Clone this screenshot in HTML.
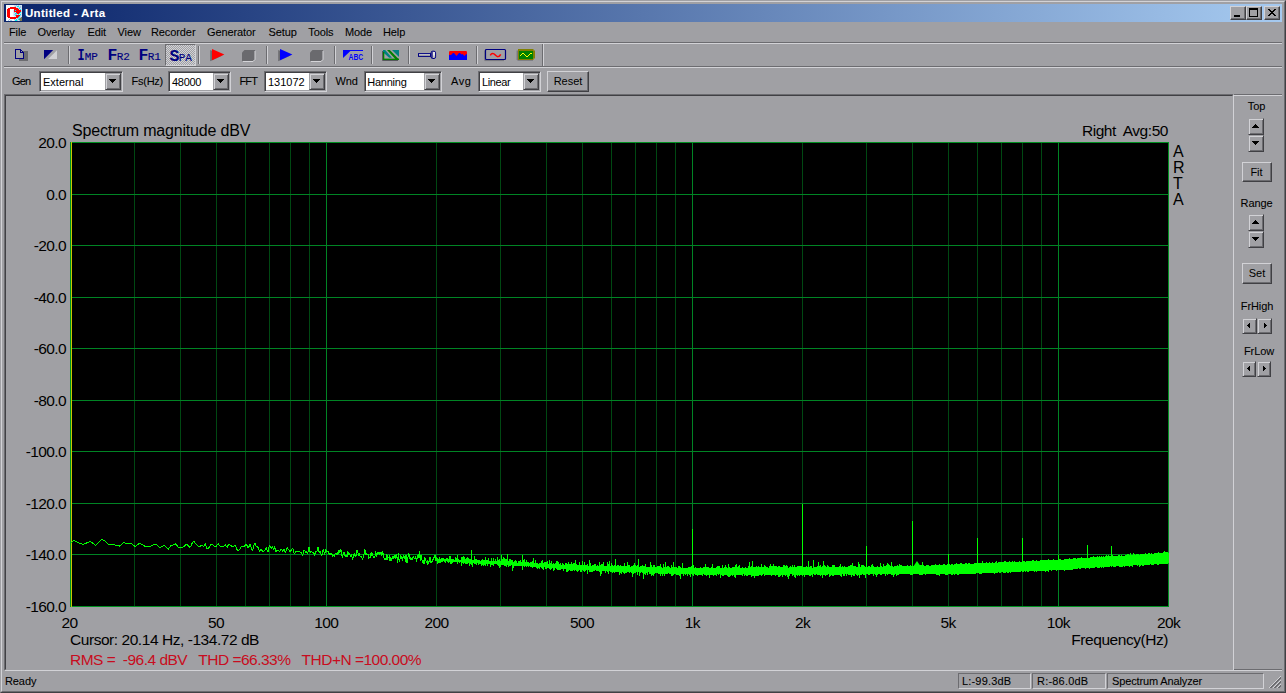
<!DOCTYPE html>
<html><head><meta charset="utf-8"><title>Untitled - Arta</title><style>
:root{--hl:#d2d2d6;--sh:#6c6c70;--dk:#404044}
*{margin:0;padding:0;box-sizing:border-box}
html,body{width:1286px;height:693px;overflow:hidden;background:#a0a0a4}
body{position:relative;font-family:"Liberation Sans",sans-serif;font-size:11px;color:#000;line-height:13px}
.a{position:absolute}
.t{position:absolute;white-space:nowrap;font-size:11px;line-height:13px;letter-spacing:-0.1px;-webkit-text-stroke:0.08px}
.p{position:absolute;white-space:nowrap;font-size:15.5px;line-height:17px;color:#000;letter-spacing:-0.45px}
.hl{position:absolute;height:1px}
.vl{position:absolute;width:1px}
.btn{position:absolute;background:#a0a0a4;border:1px solid;border-color:var(--hl) var(--dk) var(--dk) var(--hl);box-shadow:inset -1px -1px 0 var(--sh)}
.btn span{position:absolute;left:0;right:0;text-align:center;font-size:11px;line-height:13px}
.combo{position:absolute;height:21px;background:#fff;border:1px solid;border-color:var(--sh) var(--hl) var(--hl) var(--sh);box-shadow:inset 1px 1px 0 var(--dk),inset -1px -1px 0 #a0a0a4}
.combo .tx{position:absolute;left:3px;top:4px;font-size:11px;line-height:13px;white-space:nowrap}
.combo .dd{position:absolute;right:1px;top:1px;width:16px;height:17px;background:#a0a0a4;border:1px solid;border-color:#a0a0a4 var(--dk) var(--dk) #a0a0a4;box-shadow:inset 1px 1px 0 var(--hl),inset -1px -1px 0 var(--sh)}
.combo .dd:after{content:"";position:absolute;left:3px;top:5px;width:7px;height:4px;background:#000;clip-path:polygon(0 0,7px 0,7px 1px,6px 1px,6px 2px,5px 2px,5px 3px,4px 3px,4px 4px,3px 4px,3px 3px,2px 3px,2px 2px,1px 2px,1px 1px,0 1px)}
.spin{position:absolute;background:#a0a0a4;border:1px solid;border-color:#a0a0a4 var(--dk) var(--dk) #a0a0a4;box-shadow:inset 1px 1px 0 var(--hl),inset -1px -1px 0 var(--sh)}
</style></head><body>
<div class="a" style="left:0;top:0;width:1286px;height:693px;border:1px solid;border-color:#a0a0a4 var(--dk) var(--dk) #a0a0a4"></div>
<div class="a" style="left:1px;top:1px;width:1284px;height:691px;border:1px solid;border-color:var(--hl) var(--sh) var(--sh) var(--hl)"></div>
<div class="a" style="left:4px;top:4px;width:1278px;height:18px;background:linear-gradient(to right,#0a246a,#a6caf0)"></div>
<svg class="a" style="left:6px;top:5px" width="16" height="16" viewBox="0 0 16 16" shape-rendering="crispEdges"><rect width="16" height="16" fill="#f4f9fd"/><rect x="8" y="0" width="8" height="16" fill="#cfe4f4"/><g fill="#9cc4e8"><rect x="10" y="0" width="1" height="1"/><rect x="12" y="0" width="1" height="1"/><rect x="14" y="1" width="1" height="1"/><rect x="9" y="1" width="1" height="1"/><rect x="13" y="2" width="1" height="1"/><rect x="14" y="2" width="1" height="1"/><rect x="12" y="3" width="1" height="1"/><rect x="14" y="5" width="1" height="1"/><rect x="8" y="7" width="1" height="1"/><rect x="8" y="9" width="1" height="1"/><rect x="9" y="9" width="1" height="1"/><rect x="10" y="9" width="1" height="1"/><rect x="13" y="10" width="1" height="1"/><rect x="14" y="10" width="1" height="1"/><rect x="14" y="12" width="1" height="1"/><rect x="13" y="12" width="1" height="1"/><rect x="11" y="13" width="1" height="1"/><rect x="12" y="13" width="1" height="1"/><rect x="3" y="14" width="1" height="1"/><rect x="4" y="15" width="1" height="1"/><rect x="5" y="15" width="1" height="1"/><rect x="2" y="15" width="1" height="1"/><rect x="8" y="14" width="1" height="1"/><rect x="11" y="15" width="1" height="1"/><rect x="13" y="15" width="1" height="1"/></g><g fill="#00f0f0"><rect x="9" y="5" width="1" height="1"/><rect x="8" y="4" width="1" height="1"/><rect x="7" y="4" width="1" height="1"/><rect x="14" y="7" width="1" height="1"/><rect x="9" y="8" width="1" height="1"/><rect x="10" y="8" width="1" height="1"/><rect x="13" y="8" width="1" height="1"/><rect x="14" y="9" width="1" height="1"/><rect x="12" y="9" width="1" height="1"/><rect x="9" y="10" width="1" height="1"/><rect x="13" y="11" width="1" height="1"/><rect x="12" y="12" width="1" height="1"/><rect x="13" y="13" width="1" height="1"/><rect x="9" y="15" width="1" height="1"/><rect x="10" y="15" width="1" height="1"/><rect x="11" y="1" width="1" height="1"/><rect x="12" y="1" width="1" height="1"/><rect x="13" y="3" width="1" height="1"/><rect x="14" y="4" width="1" height="1"/><rect x="10" y="14" width="1" height="1"/><rect x="12" y="14" width="1" height="1"/></g><g fill="#7a7850"><rect x="14" y="13" width="1" height="1"/><rect x="15" y="13" width="1" height="1"/><rect x="13" y="14" width="1" height="1"/><rect x="14" y="14" width="1" height="1"/><rect x="15" y="14" width="1" height="1"/><rect x="14" y="15" width="1" height="1"/><rect x="15" y="15" width="1" height="1"/><rect x="15" y="12" width="1" height="1"/></g><rect x="4" y="4" width="4" height="8" fill="#fff"/><rect x="7" y="5" width="1" height="6" fill="#d8ecfa"/><g fill="#f00"><rect x="4" y="2" width="6" height="1"/><rect x="2" y="3" width="10" height="1"/><rect x="1" y="4" width="3" height="1"/><rect x="8" y="4" width="5" height="1"/><rect x="1" y="5" width="3" height="1"/><rect x="8" y="5" width="1" height="1"/><rect x="10" y="5" width="5" height="1"/><rect x="1" y="6" width="3" height="1"/><rect x="8" y="6" width="7" height="1"/><rect x="1" y="7" width="3" height="1"/><rect x="10" y="7" width="4" height="1"/><rect x="1" y="8" width="3" height="1"/><rect x="11" y="8" width="2" height="1"/><rect x="1" y="9" width="3" height="1"/><rect x="1" y="10" width="3" height="1"/><rect x="10" y="10" width="4" height="1"/><rect x="1" y="11" width="3" height="1"/><rect x="10" y="11" width="3" height="1"/><rect x="2" y="12" width="10" height="1"/><rect x="4" y="13" width="6" height="1"/></g></svg>
<div class="t" style="left:25px;top:6px;color:#fff;font-weight:bold;font-size:11.5px;line-height:14px;letter-spacing:0.32px">Untitled - Arta</div>
<div class="btn" style="left:1230px;top:6px;width:16px;height:14px"><div class="a" style="left:3px;top:8px;width:6px;height:2px;background:#000"></div></div>
<div class="btn" style="left:1246px;top:6px;width:16px;height:14px"><div class="a" style="left:2px;top:1px;width:9px;height:9px;border:1px solid #000;border-top-width:2px"></div></div>
<div class="btn" style="left:1264px;top:6px;width:16px;height:14px"><svg class="a" style="left:0;top:0" width="14" height="12" viewBox="0 0 14 12" shape-rendering="crispEdges" fill="#000"><rect x="3" y="2" width="2" height="1"/><rect x="9" y="2" width="2" height="1"/><rect x="4" y="3" width="2" height="1"/><rect x="8" y="3" width="2" height="1"/><rect x="5" y="4" width="2" height="1"/><rect x="7" y="4" width="2" height="1"/><rect x="6" y="5" width="2" height="1"/><rect x="6" y="5" width="2" height="1"/><rect x="7" y="6" width="2" height="1"/><rect x="5" y="6" width="2" height="1"/><rect x="8" y="7" width="2" height="1"/><rect x="4" y="7" width="2" height="1"/><rect x="9" y="8" width="2" height="1"/><rect x="3" y="8" width="2" height="1"/></svg></div>
<div class="t" style="left:9px;top:26px">File</div>
<div class="t" style="left:37.5px;top:26px">Overlay</div>
<div class="t" style="left:87.5px;top:26px">Edit</div>
<div class="t" style="left:117.5px;top:26px">View</div>
<div class="t" style="left:151px;top:26px">Recorder</div>
<div class="t" style="left:207px;top:26px">Generator</div>
<div class="t" style="left:268.5px;top:26px">Setup</div>
<div class="t" style="left:308.3px;top:26px">Tools</div>
<div class="t" style="left:345px;top:26px">Mode</div>
<div class="t" style="left:383px;top:26px">Help</div>
<div class="hl" style="left:4px;top:42px;width:1278px;background:var(--sh)"></div>
<div class="hl" style="left:4px;top:43px;width:1278px;background:var(--hl)"></div>
<div class="hl" style="left:4px;top:66px;width:1278px;background:var(--sh)"></div>
<div class="hl" style="left:4px;top:67px;width:1278px;background:var(--hl)"></div>
<div class="vl" style="left:68px;top:46px;height:18px;background:var(--sh)"></div>
<div class="vl" style="left:69px;top:46px;height:18px;background:var(--hl)"></div>
<div class="vl" style="left:198px;top:46px;height:18px;background:var(--sh)"></div>
<div class="vl" style="left:199px;top:46px;height:18px;background:var(--hl)"></div>
<div class="vl" style="left:266px;top:46px;height:18px;background:var(--sh)"></div>
<div class="vl" style="left:267px;top:46px;height:18px;background:var(--hl)"></div>
<div class="vl" style="left:334px;top:46px;height:18px;background:var(--sh)"></div>
<div class="vl" style="left:335px;top:46px;height:18px;background:var(--hl)"></div>
<div class="vl" style="left:371px;top:46px;height:18px;background:var(--sh)"></div>
<div class="vl" style="left:372px;top:46px;height:18px;background:var(--hl)"></div>
<div class="vl" style="left:408px;top:46px;height:18px;background:var(--sh)"></div>
<div class="vl" style="left:409px;top:46px;height:18px;background:var(--hl)"></div>
<div class="vl" style="left:476px;top:46px;height:18px;background:var(--sh)"></div>
<div class="vl" style="left:477px;top:46px;height:18px;background:var(--hl)"></div>
<div class="vl" style="left:542px;top:44px;height:22px;background:var(--sh)"></div>
<div class="vl" style="left:543px;top:44px;height:22px;background:var(--hl)"></div>
<svg class="a" style="left:14px;top:48px" width="16" height="14" viewBox="0 0 16 14" shape-rendering="crispEdges"><rect x="5" y="3" width="9" height="10" fill="#6c6c70"/><path d="M1.5 1.5h5l3 3v5.5h-8z" fill="#a0a0a4" stroke="#000080" stroke-width="1"/><path d="M6.5 1.5v3h3" fill="none" stroke="#000080"/></svg>
<svg class="a" style="left:43px;top:49px" width="15" height="11" viewBox="0 0 15 11"><path d="M14 1.2V10H5.2z" fill="#d0d0d4"/><path d="M1 1H10.2L1 10.2z" fill="#000080"/></svg>
<div class="a" style="left:165px;top:44px;width:31px;height:22px;border:1px solid;border-color:var(--sh) var(--hl) var(--hl) var(--sh);background-color:#a0a0a4;background-image:linear-gradient(45deg,#d2d2d6 25%,transparent 25%,transparent 75%,#d2d2d6 75%),linear-gradient(45deg,#d2d2d6 25%,transparent 25%,transparent 75%,#d2d2d6 75%);background-size:2px 2px;background-position:0 0,1px 1px"></div>
<div class="a" style="left:75.5px;top:47px;white-space:nowrap;font-family:'Liberation Mono',monospace;color:#000080;line-height:18px"><span style="font-size:16.5px;font-weight:bold;display:inline-block;transform:scaleX(0.72)">I</span><span style="font-size:11px;margin-left:-0.6px;letter-spacing:-0.1px;-webkit-text-stroke:0.15px #000080">MP</span></div>
<div class="a" style="left:107.5px;top:47px;white-space:nowrap;font-family:'Liberation Mono',monospace;color:#000080;line-height:18px"><span style="font-size:16.5px;font-weight:bold">F</span><span style="font-size:11px;margin-left:-0.6px;letter-spacing:-0.1px;-webkit-text-stroke:0.15px #000080">R2</span></div>
<div class="a" style="left:138.5px;top:47px;white-space:nowrap;font-family:'Liberation Mono',monospace;color:#000080;line-height:18px"><span style="font-size:16.5px;font-weight:bold">F</span><span style="font-size:11px;margin-left:-0.6px;letter-spacing:-0.1px;-webkit-text-stroke:0.15px #000080">R1</span></div>
<div class="a" style="left:169.5px;top:48px;white-space:nowrap;font-family:'Liberation Mono',monospace;color:#000080;line-height:18px"><span style="font-size:16.5px;font-weight:bold">S</span><span style="font-size:11px;margin-left:-0.6px;letter-spacing:-0.1px;-webkit-text-stroke:0.15px #000080">PA</span></div>
<svg class="a" style="left:209px;top:47px" width="17" height="15" viewBox="0 0 17 15"><path d="M1.2 3L13.6 8.6 1.2 14.2z" fill="#6c6c70"/><path d="M3 2L15.4 7.6 3 13.2z" fill="#f00"/></svg>
<svg class="a" style="left:242px;top:49px" width="14" height="13" viewBox="0 0 14 13"><path d="M2.5 1H13V10L11 12H0V3.5z" fill="#6a6a6e"/><path d="M1 12.5h10l2-2V2" fill="none" stroke="#d4d4d8" stroke-width="1"/></svg>
<svg class="a" style="left:277px;top:47px" width="17" height="15" viewBox="0 0 17 15"><path d="M1.2 3L13.6 8.6 1.2 14.2z" fill="#6c6c70"/><path d="M3 2L15.4 7.6 3 13.2z" fill="#00f"/></svg>
<svg class="a" style="left:310px;top:49px" width="14" height="13" viewBox="0 0 14 13"><path d="M2.5 1H13V10L11 12H0V3.5z" fill="#6a6a6e"/><path d="M1 12.5h10l2-2V2" fill="none" stroke="#d4d4d8" stroke-width="1"/></svg>
<svg class="a" style="left:342px;top:49px" width="23" height="12" viewBox="0 0 23 12"><path d="M1 1h20v1.1H8.4L1 8.9z" fill="#00f"/><text x="6.6" y="10.9" font-family="Liberation Sans,sans-serif" font-weight="bold" font-size="8.6" fill="#00f" textLength="14.6" lengthAdjust="spacingAndGlyphs">ABC</text></svg>
<svg class="a" style="left:382px;top:49px" width="18" height="12" viewBox="0 0 18 12"><path d="M0.5 2V11.5H16" fill="none" stroke="#58585e" stroke-width="1"/><path d="M1 1H3.2L10 8.8H7.2L1 3.2Z" fill="#008080"/><path d="M10 1H17V8Z" fill="#008080"/><path d="M5 1H7.8L17 10.4V11H14.2Z" fill="#008000"/><rect x="1" y="3" width="1.3" height="8" fill="#008000"/><rect x="1" y="9.6" width="16" height="1.4" fill="#008000"/></svg>
<svg class="a" style="left:417px;top:50px" width="20" height="10" viewBox="0 0 20 10"><defs><linearGradient id="fg" x1="0" y1="0" x2="0" y2="1"><stop offset="0" stop-color="#f4f4f4"/><stop offset="1" stop-color="#8c8c80"/></linearGradient></defs><rect x="1.5" y="3.6" width="12" height="2.8" fill="url(#fg)" stroke="#000080" stroke-width="1"/><rect x="14.1" y="1.2" width="4.5" height="7.3" rx="1.6" fill="#c4c4c0" stroke="#000080" stroke-width="1"/><rect x="14.6" y="1.5" width="1" height="6.8" fill="#000080"/><rect x="16.4" y="2" width="1.2" height="3.5" fill="#fff"/></svg>
<svg class="a" style="left:449px;top:50px" width="19" height="10" viewBox="0 0 19 10"><rect x="0" y="1" width="18" height="7" rx="1.2" fill="#f00"/><path d="M0 10V4.9H2L4 3H5L7.5 5.9 10 3H11L12.5 4.6 13.5 4 15.5 5.9 17 4.2H18V10z" fill="#00f"/></svg>
<svg class="a" style="left:484px;top:48px" width="23" height="14" viewBox="0 0 23 14"><path d="M0.8 2.5V12.6H20" fill="none" stroke="#77777d" stroke-width="1"/><rect x="1.5" y="1.5" width="20" height="10" rx="0.9" fill="#a0a0a4" stroke="#000080" stroke-width="1.2"/><path d="M6.3 7.3c1.3-2.3 3.2-2.3 5-0.2s3.9 2.2 5.4-0.7" fill="none" stroke="#f00" stroke-width="1.5"/></svg>
<svg class="a" style="left:516px;top:48px" width="20" height="14" viewBox="0 0 20 14"><rect x="0.6" y="2.5" width="1.6" height="9.5" fill="#77777d"/><rect x="1.5" y="12" width="15.5" height="0.8" fill="#77777d"/><path d="M2 1H17.5V2.5H19V10.5H17.5V12H2z" fill="#808000"/><rect x="3" y="3" width="14" height="8" fill="#008000"/><path d="M4.3 7.6L6.9 5.2 11 8.6 15.1 5.3H15.8" fill="none" stroke="#ff0" stroke-width="1" stroke-linejoin="round" shape-rendering="crispEdges"/></svg>
<div class="t" style="left:12px;top:75px;letter-spacing:-0.8px">Gen</div>
<div class="combo" style="left:39px;top:71px;width:84px"><span class="tx" style="letter-spacing:0px;margin-left:0px">External</span><span class="dd"></span></div>
<div class="t" style="left:131.5px;top:75px;letter-spacing:-0.25px">Fs(Hz)</div>
<div class="combo" style="left:168px;top:71px;width:63px"><span class="tx" style="letter-spacing:-0.3px;margin-left:0px">48000</span><span class="dd"></span></div>
<div class="t" style="left:239.5px;top:75px;letter-spacing:-0.9px">FFT</div>
<div class="combo" style="left:264px;top:71px;width:63px"><span class="tx" style="letter-spacing:0px;margin-left:0px">131072</span><span class="dd"></span></div>
<div class="t" style="left:335.5px;top:75px">Wnd</div>
<div class="combo" style="left:364px;top:71px;width:78px"><span class="tx" style="letter-spacing:-0.25px;margin-left:-0.7px">Hanning</span><span class="dd"></span></div>
<div class="t" style="left:451px;top:75px;letter-spacing:0.6px">Avg</div>
<div class="combo" style="left:478px;top:71px;width:63px"><span class="tx" style="letter-spacing:-0.4px;margin-left:0px">Linear</span><span class="dd"></span></div>
<div class="btn" style="left:547px;top:71px;width:42px;height:21px"><span style="top:3px">Reset</span></div>
<div class="a" style="left:4px;top:94px;width:1230px;height:577px;border:1px solid;border-color:var(--sh) var(--hl) var(--hl) var(--sh)"></div>
<div class="a" style="left:5px;top:95px;width:1228px;height:575px;border:1px solid;border-color:var(--dk) #a0a0a4 #a0a0a4 var(--dk)"></div>
<div class="hl" style="left:1234px;top:94px;width:48px;background:var(--sh)"></div>
<div class="hl" style="left:1234px;top:95px;width:48px;background:var(--hl)"></div>
<div class="hl" style="left:1234px;top:669px;width:48px;background:var(--sh)"></div>
<div class="hl" style="left:1234px;top:670px;width:48px;background:var(--hl)"></div>
<div class="t" style="left:1216.5px;width:80px;text-align:center;top:100px">Top</div>
<div class="spin" style="left:1248px;top:118px;width:16px;height:17px"><svg class="a" style="left:3px;top:5px" width="7" height="4" shape-rendering="crispEdges" fill="#000"><rect x="3" y="0" width="1" height="1"/><rect x="2" y="1" width="3" height="1"/><rect x="1" y="2" width="5" height="1"/><rect x="0" y="3" width="7" height="1"/></svg></div>
<div class="spin" style="left:1248px;top:135px;width:16px;height:17px"><svg class="a" style="left:3px;top:5px" width="7" height="4" shape-rendering="crispEdges" fill="#000"><rect x="0" y="0" width="7" height="1"/><rect x="1" y="1" width="5" height="1"/><rect x="2" y="2" width="3" height="1"/><rect x="3" y="3" width="1" height="1"/></svg></div>
<div class="btn" style="left:1242px;top:162px;width:30px;height:20px"><span style="top:3px;left:-1px">Fit</span></div>
<div class="t" style="left:1216.5px;width:80px;text-align:center;top:197px">Range</div>
<div class="spin" style="left:1248px;top:214px;width:16px;height:17px"><svg class="a" style="left:3px;top:5px" width="7" height="4" shape-rendering="crispEdges" fill="#000"><rect x="3" y="0" width="1" height="1"/><rect x="2" y="1" width="3" height="1"/><rect x="1" y="2" width="5" height="1"/><rect x="0" y="3" width="7" height="1"/></svg></div>
<div class="spin" style="left:1248px;top:231px;width:16px;height:17px"><svg class="a" style="left:3px;top:5px" width="7" height="4" shape-rendering="crispEdges" fill="#000"><rect x="0" y="0" width="7" height="1"/><rect x="1" y="1" width="5" height="1"/><rect x="2" y="2" width="3" height="1"/><rect x="3" y="3" width="1" height="1"/></svg></div>
<div class="btn" style="left:1242px;top:263px;width:30px;height:21px"><span style="top:3px">Set</span></div>
<div class="t" style="left:1217px;width:80px;text-align:center;top:300px">FrHigh</div>
<div class="spin" style="left:1242px;top:318px;width:15px;height:16px"><svg class="a" style="left:4px;top:4px" width="3" height="5" shape-rendering="crispEdges" fill="#000"><rect x="2" y="0" width="1" height="5"/><rect x="1" y="1" width="1" height="3"/><rect x="0" y="2" width="1" height="1"/></svg></div>
<div class="spin" style="left:1257px;top:318px;width:15px;height:16px"><svg class="a" style="left:6px;top:4px" width="3" height="5" shape-rendering="crispEdges" fill="#000"><rect x="0" y="0" width="1" height="5"/><rect x="1" y="1" width="1" height="3"/><rect x="2" y="2" width="1" height="1"/></svg></div>
<div class="t" style="left:1219px;width:80px;text-align:center;top:345px">FrLow</div>
<div class="spin" style="left:1242px;top:361px;width:14px;height:16px"><svg class="a" style="left:4px;top:4px" width="3" height="5" shape-rendering="crispEdges" fill="#000"><rect x="2" y="0" width="1" height="5"/><rect x="1" y="1" width="1" height="3"/><rect x="0" y="2" width="1" height="1"/></svg></div>
<div class="spin" style="left:1257px;top:361px;width:14px;height:16px"><svg class="a" style="left:5px;top:4px" width="3" height="5" shape-rendering="crispEdges" fill="#000"><rect x="0" y="0" width="1" height="5"/><rect x="1" y="1" width="1" height="3"/><rect x="2" y="2" width="1" height="1"/></svg></div>
<svg class="a" style="left:0;top:0" width="1286" height="693" viewBox="0 0 1286 693"><rect x="70" y="142" width="1099" height="465" fill="#000"/><path d="M134.5 142V607M180.5 142V607M216.5 142V607M245.5 142V607M269.5 142V607M290.5 142V607M309.5 142V607M436.5 142V607M500.5 142V607M546.5 142V607M582.5 142V607M611.5 142V607M635.5 142V607M656.5 142V607M675.5 142V607M802.5 142V607M866.5 142V607M912.5 142V607M948.5 142V607M977.5 142V607M1001.5 142V607M1022.5 142V607M1041.5 142V607" stroke="#004812" stroke-width="1" fill="none" shape-rendering="crispEdges"/><path d="M326.5 142V607M692.5 142V607M1058.5 142V607M70 194.5H1169M70 245.5H1169M70 297.5H1169M70 348.5H1169M70 400.5H1169M70 451.5H1169M70 503.5H1169M70 554.5H1169" stroke="#008424" stroke-width="1" fill="none" shape-rendering="crispEdges"/><rect x="70.5" y="142.5" width="1098" height="464" fill="none" stroke="#009020" stroke-width="1" shape-rendering="crispEdges"/><path d="M71.5 142V607" stroke="#c8c800" stroke-width="1" shape-rendering="crispEdges"/><path d="M70.5 542.4 L71.2 542.4 L74.2 540.4 L78.7 542.7 L82.5 544.4 L87.4 542.7 L90.2 541.2 L95.5 545.4 L102.0 539.2 L106.0 541.7 L108.5 544.8 L112.0 544.2 L116.0 545.2 L119.5 546.2 L123.4 542.7 L127.2 543.5 L130.9 543.0 L135.4 546.7 L139.6 543.0 L145.8 546.7 L150.8 546.0 L155.8 544.0 L159.5 547.7 L164.5 545.2 L168.2 549.2 L170.8 545.8 L172.4 545.3 L173.9 544.2 L175.4 543.8 L176.9 545.3 L178.4 547.3 L179.8 547.7 L181.3 547.5 L182.7 547.0 L184.2 546.5 L185.6 545.0 L187.0 544.0 L188.4 546.1 L189.7 547.4 L191.1 545.6 L192.5 542.4 L193.8 541.3 L195.1 542.9 L196.4 544.7 L197.8 545.8 L199.0 546.3 L200.3 546.1 L201.6 545.5 L202.9 546.1 L204.1 546.2 L205.4 543.4 L206.6 548.3 L207.8 548.9 L209.1 547.6 L210.3 545.4 L211.5 544.1 L212.7 544.8 L213.8 546.0 L215.0 547.0 L216.2 546.5 L217.3 544.9 L218.5 544.0 L219.6 545.6 L220.8 547.1 L221.9 546.2 L223.0 546.5 L224.1 546.2 L225.2 544.6 L226.3 546.5 L227.4 547.1 L228.5 544.4 L229.5 544.7 L230.6 545.8 L231.6 545.9 L232.7 547.0 L233.7 546.2 L234.8 545.4 L235.8 546.2 L236.8 549.6 L237.8 550.3 L238.9 550.5 L239.9 549.1 L240.9 546.9 L241.8 546.0 L242.8 547.0 L243.8 546.8 L244.8 545.5 L245.7 544.7 L246.7 544.9 L247.7 547.2 L248.6 547.9 L249.6 544.6 L250.5 544.3 L251.4 548.4 L252.3 550.9 L253.3 548.7 L254.2 543.7 L255.1 543.1 L256.0 546.3 L256.9 546.6 L257.8 546.8 L258.7 549.9 L259.6 551.1 L260.5 549.8 L261.3 549.4 L262.2 550.8 L263.1 552.0 L263.9 551.4 L264.8 550.5 L265.6 548.9 L266.5 547.9 L267.3 550.5 L268.2 551.9 L269.0 546.6 L269.8 545.9 L270.7 547.2 L271.5 548.6 L272.3 546.9 L273.1 548.4 L273.9 549.8 L274.7 546.4 L275.5 551.4 L276.3 551.5 L277.1 550.0 L277.9 550.5 L278.7 551.0 L279.5 551.3 L280.2 551.1 L281.0 549.3 L281.8 549.5 L282.6 551.2 L283.3 550.1 L284.1 549.3 L284.8 552.0 L285.6 552.8 L286.3 549.4 L287.1 547.4 L287.8 548.7 L288.6 549.6 L289.3 550.8 L290.0 551.5 L290.7 550.9 L291.5 550.6 L292.2 548.8 L292.9 548.7 L293.6 551.8 L294.3 553.6 L295.0 553.2 L295.7 552.0 L296.5 551.3 L297.1 551.6 L297.8 551.7 L298.5 551.2 L299.2 551.7 L299.9 552.1 L300.6 552.1 L301.3 552.7 L302.0 554.2 L302.6 555.1 L303.3 553.0 L304.0 550.4 L304.6 550.2 L305.3 551.7 L306.0 552.5 L306.6 551.8 L307.3 553.2 L307.9 552.6 L308.6 547.8 L309.2 547.7 L309.9 551.3 L310.5 552.6 L311.2 552.0 L311.8 551.7 L312.4 552.6 L313.1 552.3 L313.7 553.1 L314.3 555.7 L314.9 554.0 L315.6 551.2 L316.2 551.1 L316.8 551.4 L317.4 549.4 L318.0 547.0 L318.6 549.8 L319.2 552.4 L319.8 551.0 L320.5 551.9 L321.1 554.5 L321.7 555.7 L322.2 554.1 L322.8 550.4 L323.4 550.0 L324.0 552.0 L324.6 554.1 L325.2 552.6 L325.8 549.8 L326.4 550.9 L326.9 551.6 L327.5 551.3 L328.1 550.8 L328.7 552.7 L329.2 554.8 L329.8 553.7 L330.4 553.7 L330.9 554.5 L331.5 553.7 L332.1 554.2 L332.6 556.3 L333.2 555.8 L333.7 555.7 L334.3 556.5 L334.8 554.2 L335.4 553.5 L335.9 553.6 L336.5 553.8 L337.0 554.7 L337.6 552.5 L338.1 553.3 L338.6 550.0 L339.2 550.0 L339.7 552.3 L340.2 551.4 L340.8 549.6 L341.3 551.2 L341.8 555.1 L342.4 557.2 L342.9 556.0 L343.4 553.3 L343.9 551.9 L344.4 552.4 L345.0 555.5 L345.5 556.4 L346.0 555.0 L346.5 556.6 L347.0 556.8 L347.5 552.8 L348.0 551.6 L348.5 554.6 L349.0 554.6 L349.5 553.3 L350.0 554.6 L350.5 556.5 L351.0 556.2 L351.5 554.7 L352.0 556.6 L352.5 559.1 L353.0 557.9 L353.5 554.6 L354.0 553.8 L354.5 553.5 L355.0 555.6 L355.4 556.0 L355.9 556.8 L356.4 553.3 L356.9 550.0 L357.4 550.3 L357.8 551.8 L358.3 554.7 L358.8 555.4 L359.3 553.9 L359.7 554.9 L360.2 556.3 L360.7 556.8 L361.1 557.2 L361.6 556.8 L362.1 558.0 L362.5 559.8 L363.0 558.5 L363.4 556.0 L363.9 554.3 L364.4 551.6 L364.8 549.8 L365.3 551.7 L365.7 554.2 L366.2 553.9 L366.6 553.9 L367.1 554.9 L367.5 554.5 L368.0 554.4 L368.4 556.8 L368.9 558.7 L369.3 557.5 L369.8 557.3 L370.2 557.5 L370.6 554.9 L371.1 552.6 L371.5 554.4 L371.9 555.5 L372.4 553.1 L372.8 554.0 L373.2 557.6 L373.7 558.0 L374.1 557.1 L374.5 557.3 L375.0 555.7 L375.4 552.5 L375.8 551.4 L376.2 554.1 L376.7 556.4 L377.1 554.9 L377.5 553.1 L377.9 552.4 L378.3 552.5 L378.8 553.4 L379.2 554.2 L379.6 553.6 L380.0 552.5 L380.4 554.0 L380.8 553.6 L381.2 552.8 L381.7 555.5 L382.1 554.4 L382.5 551.2 L382.9 553.0 L383.3 553.6 L383.7 556.5 L384.1 558.0 L384.5 559.0 L384.9 558.6 L385.3 558.8 L385.7 559.7 L386.1 559.3 L386.5 556.0 L386.9 554.0 L387.3 557.5 L387.7 559.5 L388.1 556.8 L388.5 557.3 L388.9 558.2 L389.3 555.7 L389.6 558.2 L390.0 560.7 L390.4 557.9 L390.8 558.9 L391.2 560.7 L391.6 558.8 L392.0 558.6 L392.4 558.2 L392.7 556.0 L393.1 556.2 L393.5 558.2 L393.9 558.7 L394.3 557.5 L394.6 555.8 L395.0 554.7 L395.4 556.3 L395.8 558.5 L396.1 557.4 L396.5 555.0 L396.9 557.3 L397.3 559.3 L397.6 562.3 L398.0 557.1 L398.4 553.7 L398.7 556.5 L399.1 560.3 L399.5 561.3 L399.8 559.6 L400.2 558.2 L400.6 556.6 L400.9 555.4 L401.3 557.9 L401.7 558.4 L402.0 557.8 L402.4 561.0 L402.7 560.8 L403.1 556.1 L403.4 555.4 L403.8 557.8 L404.2 557.9 L404.5 556.3 L404.9 557.5 L405.2 561.7 L405.6 560.5 L405.9 555.3 L406.3 555.8 L406.6 560.6 L407.0 562.9 L407.3 562.9 L407.7 560.3 L408.0 557.3 L408.4 555.7 L408.7 553.6 L409.1 554.6 L409.4 557.7 L409.7 558.3 L410.1 557.1 L410.4 557.6 L410.8 559.2 L411.1 559.8 L411.5 559.9 L411.8 558.9 L412.1 558.5 L412.5 559.4 L412.8 558.3 L413.1 556.2 L413.5 556.4 L413.8 557.7 L414.2 558.3 L414.5 558.6 L414.8 558.7 L415.2 558.6 L415.5 557.2 L415.8 556.4 L416.1 559.1 L416.5 561.2 L416.8 560.1 L417.1 559.0 L417.5 558.3 L417.8 555.5 L418.1 554.3 L418.4 556.1 L418.8 557.7 L419.1 558.2 L419.4 554.9 L419.7 551.9 L420.1 555.8 L420.4 560.4 L420.7 558.3 L421.0 555.2 L421.3 556.6 L421.7 559.6 L422.0 560.4 L422.3 561.1 L422.6 562.5 L422.9 561.6 L423.2 560.1 L423.6 561.6 L423.9 563.5 L424.2 563.3 L424.5 560.8 L424.8 557.9 L425.1 558.5 L425.4 560.0 L425.7 560.2 L426.1 561.4 L426.4 562.1 L426.7 561.2 L427.0 562.0 L427.3 564.9 L427.6 563.7 L427.9 560.1 L428.2 561.7 L428.5 563.9 L428.8 561.9 L429.1 561.6 L429.4 562.0 L429.7 557.1 L430.0 557.4 L430.3 559.0 L430.6 561.3 L430.9 562.6 L431.2 562.0 L431.5 561.1 L431.8 561.6 L432.1 561.5 L432.4 560.5 L432.7 559.7 L433.0 559.8 L433.3 559.7 L433.6 557.7 L433.9 557.5 L434.2 557.7 L434.5 556.6 L434.8 555.6 L435.1 554.9 L435.4 557.1 L435.7 560.7 L436.0 561.3 L436.3 560.0 L436.5 558.0 L436.8 558.7" stroke="#00ff00" stroke-width="1" fill="none" stroke-linejoin="round" shape-rendering="crispEdges"/><path d="M436.5 558.2V561.2M437.5 558.2V563.8M438.5 559.0V563.2M439.5 557.2V562.6M440.5 559.0V562.6M441.5 558.0V561.6M442.5 558.2V562.3M443.5 558.1V561.2M444.5 558.5V561.5M445.5 559.4V562.8M446.5 558.1V561.4M447.5 558.3V561.7M448.5 558.6V562.8M449.5 555.7V561.8M450.5 555.9V564.2M451.5 558.9V563.5M452.5 558.9V562.9M453.5 558.8V561.9M454.5 559.7V561.8M455.5 556.8V562.4M456.5 558.0V562.3M457.5 555.2V564.0M458.5 559.3V562.4M459.5 560.0V562.7M460.5 559.8V562.3M461.5 556.7V566.0M462.5 557.0V563.0M463.5 556.0V564.0M464.5 556.9V563.4M465.5 558.5V563.8M466.5 558.1V564.3M467.5 556.6V563.8M468.5 557.5V563.4M469.5 559.1V565.5M470.5 558.6V563.7M471.5 559.1V564.8M472.5 560.4V566.7M473.5 560.2V562.8M474.5 556.2V563.5M475.5 559.2V564.2M476.5 559.3V564.7M477.5 559.7V563.4M478.5 560.1V564.9M479.5 559.5V564.0M480.5 560.7V563.6M481.5 560.2V566.1M482.5 559.0V564.7M483.5 560.3V565.9M484.5 559.8V565.4M485.5 556.7V566.2M486.5 559.9V564.2M487.5 560.1V565.5M488.5 558.4V563.8M489.5 560.6V563.7M490.5 561.1V566.5M491.5 557.8V564.8M492.5 560.5V565.0M493.5 557.7V565.7M494.5 560.7V564.2M495.5 558.6V564.2M496.5 561.3V564.2M497.5 556.7V565.3M498.5 560.4V566.0M499.5 559.3V567.6M500.5 560.9V566.9M501.5 555.3V565.0M502.5 559.0V565.3M503.5 557.4V564.8M504.5 557.6V565.5M505.5 558.8V566.0M506.5 558.5V567.4M507.5 553.8V565.0M508.5 561.1V567.0M509.5 559.3V565.6M510.5 559.1V565.7M511.5 560.3V565.4M512.5 560.4V570.6M513.5 562.3V568.0M514.5 561.0V566.4M515.5 559.8V565.7M516.5 561.4V565.5M517.5 562.5V565.7M518.5 561.4V566.2M519.5 561.3V566.2M520.5 559.6V566.1M521.5 562.1V566.3M522.5 555.0V570.2M523.5 560.3V566.1M524.5 558.6V566.8M525.5 562.0V566.0M526.5 559.6V566.5M527.5 562.0V566.1M528.5 561.9V566.9M529.5 562.7V566.3M530.5 561.9V566.8M531.5 562.3V567.3M532.5 561.2V568.2M533.5 558.3V567.3M534.5 563.2V567.3M535.5 560.3V567.1M536.5 562.8V568.4M537.5 563.2V569.2M538.5 563.6V568.2M539.5 562.5V568.9M540.5 562.6V567.3M541.5 560.6V568.0M542.5 560.1V568.5M543.5 563.4V569.8M544.5 562.3V567.2M545.5 561.9V569.4M546.5 562.4V569.0M547.5 561.2V567.9M548.5 564.1V568.3M549.5 559.6V569.4M550.5 563.1V569.7M551.5 561.4V568.8M552.5 563.9V567.8M553.5 563.4V571.1M554.5 563.9V570.2M555.5 563.0V568.4M556.5 561.3V568.6M557.5 561.1V570.1M558.5 562.2V570.3M559.5 564.2V569.6M560.5 562.5V569.6M561.5 564.5V569.1M562.5 563.2V569.3M563.5 563.8V571.1M564.5 564.9V569.1M565.5 562.8V569.4M566.5 563.4V571.5M567.5 563.7V571.7M568.5 562.2V571.0M569.5 564.2V569.5M570.5 564.0V570.9M571.5 561.7V570.6M572.5 563.5V571.2M573.5 563.1V569.7M574.5 563.0V570.6M575.5 560.3V570.3M576.5 563.6V571.1M577.5 565.3V572.4M578.5 565.3V570.8M579.5 562.3V569.9M580.5 565.3V571.6M581.5 565.1V571.6M582.5 560.8V569.7M583.5 565.3V571.2M584.5 562.4V572.3M585.5 565.2V571.4M586.5 564.6V570.4M587.5 564.0V574.2M588.5 565.6V570.4M589.5 560.0V571.7M590.5 563.4V571.8M591.5 565.7V571.9M592.5 564.7V571.9M593.5 564.6V570.7M594.5 563.6V570.9M595.5 564.2V570.3M596.5 565.6V571.0M597.5 564.6V571.4M598.5 565.6V571.0M599.5 562.4V572.3M600.5 565.4V575.6M601.5 564.3V573.6M602.5 563.9V571.1M603.5 561.6V570.6M604.5 566.1V571.2M605.5 566.2V573.2M606.5 566.1V570.8M607.5 561.9V572.3M608.5 564.0V574.4M609.5 561.3V570.8M610.5 566.2V572.0M611.5 562.8V572.0M612.5 564.9V573.1M613.5 565.5V572.4M614.5 564.6V573.1M615.5 559.1V572.2M616.5 566.0V571.7M617.5 565.2V572.1M618.5 564.5V572.3M619.5 565.6V575.1M620.5 564.7V573.1M621.5 565.6V574.2M622.5 565.9V572.4M623.5 566.2V572.7M624.5 563.1V574.1M625.5 565.8V572.5M626.5 566.4V572.5M627.5 562.0V571.9M628.5 565.0V571.8M629.5 564.6V573.4M630.5 566.7V572.0M631.5 566.0V573.1M632.5 566.3V577.0M633.5 565.4V573.6M634.5 563.1V572.9M635.5 565.3V573.0M636.5 565.6V572.2M637.5 565.3V575.1M638.5 559.2V572.2M639.5 566.6V575.7M640.5 566.1V573.3M641.5 566.3V572.2M642.5 565.0V572.9M643.5 565.8V578.6M644.5 566.2V574.2M645.5 564.3V574.9M646.5 566.5V572.8M647.5 567.4V574.5M648.5 566.5V572.4M649.5 566.7V573.7M650.5 561.7V573.9M651.5 565.4V576.0M652.5 566.7V574.7M653.5 564.8V575.5M654.5 565.3V574.0M655.5 567.2V573.3M656.5 567.0V573.1M657.5 565.5V572.9M658.5 565.9V573.5M659.5 566.4V574.2M660.5 564.3V575.9M661.5 566.5V574.1M662.5 567.6V576.0M663.5 563.7V574.0M664.5 567.0V576.2M665.5 561.6V573.5M666.5 567.1V573.7M667.5 566.2V573.9M668.5 565.7V573.4M669.5 566.8V574.4M670.5 567.9V574.0M671.5 564.9V575.6M672.5 566.9V575.9M673.5 561.8V574.5M674.5 566.5V574.2M675.5 567.1V574.1M676.5 567.3V575.3M677.5 568.1V575.3M678.5 566.3V574.6M679.5 565.7V576.4M680.5 566.9V578.9M681.5 568.1V573.8M682.5 562.9V573.9M683.5 567.9V575.8M684.5 568.0V574.0M685.5 567.6V574.6M686.5 568.1V574.0M687.5 567.5V576.4M688.5 566.5V574.0M689.5 567.4V575.2M690.5 567.3V576.8M691.5 566.0V574.2M692.5 566.9V575.2M693.5 564.9V575.8M694.5 567.8V574.1M695.5 566.7V574.7M696.5 568.3V574.9M697.5 568.3V576.1M698.5 567.5V574.5M699.5 568.1V574.7M700.5 567.2V575.0M701.5 567.5V575.3M702.5 567.9V575.6M703.5 566.8V574.4M704.5 566.5V574.7M705.5 564.0V574.5M706.5 567.1V575.7M707.5 566.9V574.6M708.5 566.5V575.4M709.5 568.0V577.5M710.5 568.1V574.9M711.5 567.3V575.2M712.5 563.5V574.5M713.5 567.7V575.6M714.5 567.6V575.0M715.5 567.5V575.0M716.5 567.0V576.3M717.5 566.1V574.4M718.5 565.5V574.8M719.5 565.7V574.4M720.5 568.0V577.9M721.5 568.1V574.9M722.5 564.9V575.8M723.5 567.6V575.7M724.5 566.8V574.9M725.5 565.1V574.8M726.5 566.8V574.9M727.5 567.7V575.8M728.5 563.8V577.1M729.5 566.5V577.4M730.5 568.0V576.0M731.5 568.0V575.4M732.5 567.1V576.3M733.5 567.2V575.4M734.5 566.9V576.9M735.5 565.2V577.6M736.5 564.3V574.7M737.5 567.1V575.1M738.5 566.3V575.3M739.5 565.2V575.1M740.5 567.5V575.3M741.5 567.9V575.4M742.5 567.0V575.8M743.5 567.5V574.4M744.5 567.8V576.1M745.5 566.7V575.4M746.5 567.5V576.2M747.5 567.9V575.7M748.5 565.7V575.2M749.5 561.6V574.6M750.5 567.3V574.7M751.5 566.4V576.8M752.5 560.8V575.7M753.5 567.4V575.8M754.5 567.4V577.5M755.5 566.9V576.4M756.5 566.1V576.0M757.5 567.4V576.1M758.5 566.2V575.5M759.5 566.5V575.0M760.5 566.5V574.9M761.5 563.8V575.5M762.5 566.7V575.0M763.5 566.8V574.4M764.5 564.8V575.6M765.5 565.7V575.4M766.5 566.5V575.1M767.5 566.5V575.3M768.5 567.5V574.6M769.5 566.0V574.6M770.5 564.3V574.5M771.5 565.6V575.6M772.5 566.4V574.6M773.5 564.0V574.9M774.5 566.3V575.3M775.5 565.6V575.5M776.5 566.3V574.8M777.5 566.7V574.7M778.5 566.1V576.5M779.5 565.6V576.5M780.5 567.3V576.2M781.5 566.5V575.2M782.5 566.5V576.7M783.5 565.3V574.8M784.5 564.8V574.9M785.5 566.2V575.6M786.5 564.9V574.5M787.5 565.9V577.1M788.5 567.6V578.7M789.5 566.8V576.3M790.5 565.8V574.4M791.5 567.0V574.4M792.5 564.6V575.8M793.5 567.1V574.6M794.5 564.6V576.5M795.5 566.8V577.8M796.5 567.2V574.8M797.5 566.4V575.6M798.5 566.0V575.3M799.5 566.3V575.9M800.5 565.6V574.5M801.5 565.6V575.1M802.5 566.5V575.6M803.5 567.0V574.5M804.5 566.6V576.7M805.5 566.9V574.7M806.5 566.1V574.5M807.5 566.5V575.3M808.5 561.1V574.6M809.5 567.0V576.3M810.5 566.2V575.6M811.5 566.3V574.5M812.5 567.5V576.6M813.5 560.2V574.3M814.5 566.6V574.5M815.5 566.5V575.0M816.5 567.1V574.3M817.5 566.0V574.8M818.5 562.3V574.7M819.5 566.4V575.1M820.5 565.2V575.9M821.5 567.4V574.7M822.5 565.5V577.7M823.5 561.1V575.0M824.5 565.0V574.5M825.5 565.8V575.6M826.5 567.3V575.4M827.5 564.8V574.5M828.5 565.8V574.3M829.5 566.8V577.1M830.5 566.8V576.0M831.5 566.9V574.9M832.5 565.4V575.6M833.5 564.6V575.6M834.5 564.6V574.6M835.5 567.2V575.3M836.5 566.6V574.5M837.5 566.9V574.6M838.5 567.1V575.4M839.5 566.3V574.9M840.5 563.8V575.8M841.5 567.2V576.5M842.5 566.2V574.0M843.5 566.5V576.0M844.5 565.5V575.6M845.5 566.8V574.0M846.5 566.8V575.7M847.5 567.1V574.3M848.5 565.7V575.1M849.5 565.8V575.0M850.5 565.0V574.9M851.5 564.6V576.6M852.5 563.4V575.2M853.5 566.1V575.6M854.5 566.2V576.3M855.5 566.3V574.4M856.5 567.2V574.8M857.5 566.8V575.5M858.5 561.8V574.9M859.5 563.7V578.0M860.5 567.2V574.6M861.5 565.1V575.1M862.5 564.7V574.1M863.5 564.6V575.1M864.5 565.9V575.4M865.5 566.8V577.6M866.5 567.1V574.1M867.5 567.1V573.8M868.5 565.9V575.1M869.5 566.4V575.3M870.5 566.7V573.9M871.5 565.0V574.1M872.5 564.4V574.1M873.5 565.9V575.5M874.5 567.0V573.9M875.5 566.8V575.1M876.5 567.0V576.8M877.5 565.7V574.9M878.5 566.6V573.7M879.5 566.6V573.7M880.5 563.0V575.0M881.5 566.1V574.7M882.5 566.9V573.8M883.5 564.4V573.7M884.5 565.8V573.8M885.5 565.9V575.7M886.5 565.1V573.9M887.5 563.0V574.5M888.5 564.0V574.2M889.5 565.1V574.4M890.5 566.3V574.4M891.5 561.5V574.9M892.5 566.2V575.4M893.5 566.7V576.6M894.5 566.4V575.3M895.5 566.0V574.3M896.5 566.2V575.7M897.5 565.1V575.1M898.5 565.6V574.7M899.5 564.4V573.8M900.5 565.4V574.3M901.5 565.1V574.0M902.5 566.4V573.8M903.5 565.8V573.7M904.5 566.2V574.3M905.5 566.1V574.2M906.5 566.2V573.8M907.5 564.8V573.8M908.5 565.8V574.1M909.5 565.8V574.3M910.5 565.0V574.5M911.5 565.9V574.5M912.5 565.9V574.5M913.5 565.9V573.8M914.5 565.5V573.8M915.5 565.2V573.9M916.5 565.2V574.1M917.5 565.7V573.9M918.5 565.4V574.3M919.5 565.1V574.9M920.5 565.3V574.5M921.5 565.0V575.1M922.5 562.2V575.0M923.5 564.7V573.9M924.5 565.5V574.3M925.5 565.5V575.1M926.5 564.5V574.1M927.5 564.7V573.9M928.5 565.0V574.4M929.5 565.6V574.2M930.5 565.6V574.0M931.5 565.2V574.3M932.5 565.1V574.1M933.5 565.1V574.0M934.5 564.9V574.1M935.5 563.7V574.4M936.5 565.2V574.6M937.5 565.1V574.6M938.5 564.6V575.3M939.5 564.4V575.5M940.5 565.1V574.3M941.5 565.0V574.0M942.5 564.8V574.2M943.5 563.7V574.3M944.5 564.3V574.0M945.5 565.1V574.8M946.5 565.0V574.7M947.5 564.2V574.6M948.5 564.5V574.4M949.5 564.1V574.3M950.5 564.5V574.1M951.5 564.0V574.8M952.5 563.5V575.0M953.5 564.5V574.2M954.5 564.0V574.8M955.5 563.7V574.4M956.5 563.4V573.8M957.5 564.1V574.5M958.5 564.3V574.7M959.5 564.3V574.1M960.5 563.2V574.2M961.5 562.7V574.0M962.5 563.6V574.0M963.5 564.0V573.8M964.5 563.6V574.4M965.5 563.0V573.8M966.5 563.1V574.0M967.5 563.7V574.2M968.5 563.4V574.0M969.5 563.3V574.3M970.5 563.7V573.5M971.5 563.6V574.0M972.5 563.6V574.0M973.5 563.6V573.6M974.5 563.1V573.8M975.5 563.4V573.6M976.5 562.6V573.4M977.5 562.8V573.4M978.5 563.2V573.2M979.5 563.3V573.8M980.5 563.1V573.8M981.5 563.1V574.0M982.5 561.2V573.2M983.5 562.6V572.9M984.5 562.7V573.4M985.5 563.0V573.1M986.5 561.9V572.7M987.5 562.7V573.1M988.5 562.6V573.3M989.5 562.2V572.8M990.5 563.0V573.2M991.5 562.5V572.6M992.5 562.4V573.0M993.5 562.5V572.6M994.5 562.7V573.5M995.5 562.4V572.9M996.5 561.4V573.2M997.5 562.7V572.5M998.5 561.5V572.3M999.5 562.4V572.7M1000.5 562.4V572.9M1001.5 562.0V572.1M1002.5 562.4V572.1M1003.5 561.6V572.7M1004.5 561.2V572.6M1005.5 561.4V572.5M1006.5 562.2V572.1M1007.5 562.3V572.6M1008.5 561.9V572.7M1009.5 561.2V572.2M1010.5 562.1V573.1M1011.5 562.1V572.2M1012.5 561.4V571.9M1013.5 561.7V571.8M1014.5 560.5V572.1M1015.5 561.9V572.0M1016.5 561.8V571.5M1017.5 561.5V572.1M1018.5 561.5V571.6M1019.5 561.0V571.6M1020.5 561.8V571.8M1021.5 561.5V571.4M1022.5 561.4V571.9M1023.5 560.5V572.2M1024.5 560.9V571.4M1025.5 561.5V571.8M1026.5 561.4V571.4M1027.5 561.3V571.5M1028.5 560.9V571.6M1029.5 561.2V571.1M1030.5 560.9V570.9M1031.5 561.2V571.2M1032.5 559.9V570.9M1033.5 560.4V571.2M1034.5 561.0V571.5M1035.5 561.0V571.3M1036.5 560.1V572.0M1037.5 561.0V571.0M1038.5 560.8V570.9M1039.5 560.5V570.6M1040.5 560.4V570.7M1041.5 560.2V571.3M1042.5 560.3V571.2M1043.5 559.9V570.5M1044.5 560.2V570.8M1045.5 559.8V571.5M1046.5 560.2V570.5M1047.5 559.8V570.5M1048.5 559.3V571.5M1049.5 560.3V570.2M1050.5 560.1V570.3M1051.5 559.8V570.8M1052.5 559.9V570.2M1053.5 559.3V570.2M1054.5 559.8V570.2M1055.5 559.8V569.9M1056.5 560.3V570.7M1057.5 559.5V570.3M1058.5 560.1V570.2M1059.5 559.4V569.8M1060.5 559.1V569.7M1061.5 559.7V569.7M1062.5 559.6V569.8M1063.5 559.5V569.9M1064.5 559.4V571.1M1065.5 558.8V569.7M1066.5 558.9V570.2M1067.5 559.2V569.7M1068.5 559.0V570.0M1069.5 558.3V569.7M1070.5 558.9V569.5M1071.5 558.5V569.8M1072.5 559.0V569.9M1073.5 557.7V569.1M1074.5 558.2V569.4M1075.5 558.3V568.8M1076.5 558.6V569.0M1077.5 558.1V569.2M1078.5 558.0V568.4M1079.5 558.1V569.2M1080.5 558.4V569.4M1081.5 557.3V568.3M1082.5 558.0V568.3M1083.5 557.7V568.3M1084.5 558.0V568.1M1085.5 558.0V569.4M1086.5 557.8V568.2M1087.5 557.9V568.2M1088.5 557.6V568.2M1089.5 557.8V568.8M1090.5 557.4V567.7M1091.5 557.4V568.4M1092.5 557.3V568.3M1093.5 556.4V567.7M1094.5 557.1V567.7M1095.5 556.6V567.3M1096.5 556.9V567.2M1097.5 556.2V567.5M1098.5 556.8V567.7M1099.5 556.3V567.9M1100.5 556.6V567.1M1101.5 556.4V567.6M1102.5 556.8V567.2M1103.5 556.4V568.0M1104.5 556.8V567.4M1105.5 556.2V566.9M1106.5 555.4V566.6M1107.5 555.8V566.6M1108.5 555.3V567.1M1109.5 555.7V566.5M1110.5 556.2V566.4M1111.5 555.9V567.1M1112.5 554.6V566.4M1113.5 556.0V567.1M1114.5 556.2V566.8M1115.5 555.8V567.2M1116.5 555.7V566.4M1117.5 555.5V566.2M1118.5 554.7V566.2M1119.5 555.0V566.6M1120.5 555.7V566.5M1121.5 554.9V566.6M1122.5 555.6V566.8M1123.5 555.6V565.9M1124.5 555.5V566.5M1125.5 555.2V565.8M1126.5 555.0V565.9M1127.5 554.3V565.8M1128.5 554.2V566.3M1129.5 554.8V566.7M1130.5 552.7V565.7M1131.5 554.9V565.6M1132.5 554.6V566.5M1133.5 553.3V565.4M1134.5 554.3V565.4M1135.5 554.8V565.1M1136.5 554.0V565.2M1137.5 553.9V565.5M1138.5 554.1V564.9M1139.5 554.5V566.5M1140.5 553.9V565.6M1141.5 553.6V565.1M1142.5 554.4V565.8M1143.5 554.3V565.9M1144.5 553.9V564.9M1145.5 553.3V564.8M1146.5 553.8V564.6M1147.5 553.9V564.6M1148.5 553.3V564.5M1149.5 553.2V564.9M1150.5 553.6V564.3M1151.5 553.3V564.5M1152.5 553.7V564.5M1153.5 553.5V564.9M1154.5 552.8V564.0M1155.5 553.4V564.0M1156.5 553.3V564.3M1157.5 553.3V564.7M1158.5 552.1V564.8M1159.5 553.2V563.8M1160.5 552.8V564.0M1161.5 553.2V563.6M1162.5 553.1V563.9M1163.5 552.3V563.6M1164.5 551.0V563.6M1165.5 552.2V564.0M1166.5 551.7V563.6M1167.5 552.4V564.1M1168.5 552.6V563.4" stroke="#00ff00" stroke-width="1" fill="none" shape-rendering="crispEdges"/><path d="M692.5 528.5V571.3M802.5 503.5V571.0M866.5 546V570.4M912.5 521V570.0M948.5 553.5V569.5M977.5 538V568.3M1022.5 538V566.5M1058.5 554.5V565.0M1087.5 545V562.9M1111.5 546V561.4M471.5 549.5V561.5" stroke="#00ff00" stroke-width="1" fill="none" shape-rendering="crispEdges"/><path d="M913 567L917 561 921 567z" fill="#00ff00"/></svg>
<div class="p" style="left:72px;top:122px;font-size:16px;line-height:18px;letter-spacing:-0.19px">Spectrum magnitude dBV</div>
<div class="p" style="left:968px;width:200px;text-align:right;top:122px">Right&nbsp; Avg:50</div>
<div class="p" style="left:1173px;top:143px;font-size:16px;line-height:18px;letter-spacing:0">A</div>
<div class="p" style="left:1173px;top:159px;font-size:16px;line-height:18px;letter-spacing:0">R</div>
<div class="p" style="left:1173px;top:175px;font-size:16px;line-height:18px;letter-spacing:0">T</div>
<div class="p" style="left:1173px;top:191px;font-size:16px;line-height:18px;letter-spacing:0">A</div>
<div class="p" style="left:0;width:66px;text-align:right;top:134px;letter-spacing:-0.62px">20.0</div>
<div class="p" style="left:0;width:66px;text-align:right;top:186px;letter-spacing:-0.62px">0.0</div>
<div class="p" style="left:0;width:66px;text-align:right;top:237px;letter-spacing:-0.62px">-20.0</div>
<div class="p" style="left:0;width:66px;text-align:right;top:289px;letter-spacing:-0.62px">-40.0</div>
<div class="p" style="left:0;width:66px;text-align:right;top:340px;letter-spacing:-0.62px">-60.0</div>
<div class="p" style="left:0;width:66px;text-align:right;top:392px;letter-spacing:-0.62px">-80.0</div>
<div class="p" style="left:0;width:66px;text-align:right;top:443px;letter-spacing:-0.62px">-100.0</div>
<div class="p" style="left:0;width:66px;text-align:right;top:495px;letter-spacing:-0.62px">-120.0</div>
<div class="p" style="left:0;width:66px;text-align:right;top:546px;letter-spacing:-0.62px">-140.0</div>
<div class="p" style="left:0;width:66px;text-align:right;top:598px;letter-spacing:-0.62px">-160.0</div>
<div class="p" style="left:29.5px;width:80px;text-align:center;top:614px;letter-spacing:-0.62px">20</div>
<div class="p" style="left:176.1px;width:80px;text-align:center;top:614px;letter-spacing:-0.62px">50</div>
<div class="p" style="left:286.3px;width:80px;text-align:center;top:614px;letter-spacing:-0.62px">100</div>
<div class="p" style="left:396.5px;width:80px;text-align:center;top:614px;letter-spacing:-0.62px">200</div>
<div class="p" style="left:542.1px;width:80px;text-align:center;top:614px;letter-spacing:-0.62px">500</div>
<div class="p" style="left:652.3px;width:80px;text-align:center;top:614px;letter-spacing:-0.62px">1k</div>
<div class="p" style="left:762.5px;width:80px;text-align:center;top:614px;letter-spacing:-0.62px">2k</div>
<div class="p" style="left:908.1px;width:80px;text-align:center;top:614px;letter-spacing:-0.62px">5k</div>
<div class="p" style="left:1018.3px;width:80px;text-align:center;top:614px;letter-spacing:-0.62px">10k</div>
<div class="p" style="left:1128.5px;width:80px;text-align:center;top:614px;letter-spacing:-0.62px">20k</div>
<div class="p" style="left:968px;width:200px;text-align:right;top:631px">Frequency(Hz)</div>
<div class="p" style="left:70px;top:631px">Cursor: 20.14 Hz, -134.72 dB</div>
<div class="p" style="left:70px;top:651px;color:#c80c20;letter-spacing:-0.51px">RMS =&nbsp; -96.4 dBV&nbsp;&nbsp; THD =66.33%&nbsp;&nbsp; THD+N =100.00%</div>
<div class="t" style="left:5px;top:675px">Ready</div>
<div class="a" style="left:958px;top:673px;width:73px;height:16px;border:1px solid;border-color:var(--sh) var(--hl) var(--hl) var(--sh)"></div>
<div class="t" style="left:962px;top:675px;letter-spacing:0.17px">L:-99.3dB</div>
<div class="a" style="left:1032px;top:673px;width:74px;height:16px;border:1px solid;border-color:var(--sh) var(--hl) var(--hl) var(--sh)"></div>
<div class="t" style="left:1037px;top:675px;letter-spacing:0.2px">R:-86.0dB</div>
<div class="a" style="left:1107px;top:673px;width:157px;height:16px;border:1px solid;border-color:var(--sh) var(--hl) var(--hl) var(--sh)"></div>
<div class="t" style="left:1112px;top:675px;letter-spacing:-0.13px">Spectrum Analyzer</div>
<svg class="a" style="left:1268px;top:675px" width="14" height="14" viewBox="0 0 14 14" shape-rendering="crispEdges"><path d="M1 13L13 1M5 13L13 5M9 13L13 9" stroke="#d2d2d6" stroke-width="1"/><path d="M2 13L13 2M3 13L13 3M6 13L13 6M7 13L13 7M10 13L13 10M11 13L13 11" stroke="#6c6c70" stroke-width="1"/></svg>
</body></html>
